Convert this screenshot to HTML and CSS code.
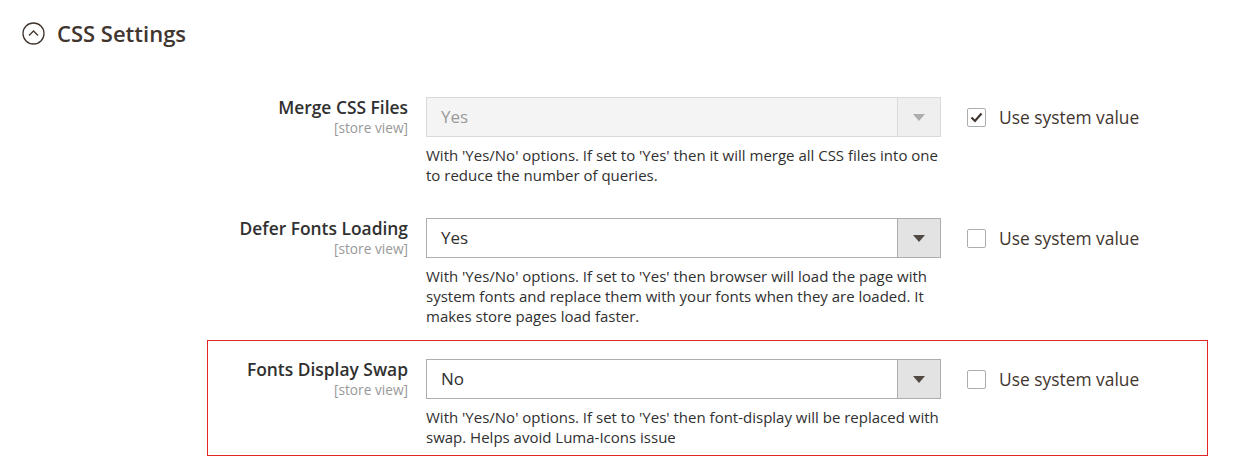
FILE: index.html
```html
<!DOCTYPE html>
<html lang="en">

<head>
    <meta charset="UTF-8">
    <title>CSS Settings</title>
    <link rel="stylesheet" href="styles.css">
</head>

<body>
    <div class="section-head">
        <span class="toggle-icon">
            <svg width="23" height="23" viewBox="0 0 23 23">
                <circle cx="11.5" cy="11.5" r="10.5" fill="none" stroke="#41362f" stroke-width="1.3" />
                <path d="M7 13.5 L11.5 9 L16 13.5" fill="none" stroke="#41362f" stroke-width="1.3" />
            </svg>
        </span>
        <h2 class="section-title">CSS Settings</h2>
    </div>

    <div class="config-table">
        <div class="config-row">
            <div class="config-label">
                <span class="label-text">Merge CSS Files</span>
                <span class="scope">[store view]</span>
            </div>
            <div class="config-value">
                <div class="select disabled">
                    <span class="select-value">Yes</span>
                    <span class="select-btn"><span class="arrow"></span></span>
                </div>
                <p class="note">With 'Yes/No' options. If set to 'Yes' then it will merge all CSS files into one to reduce the number of queries.</p>
            </div>
            <label class="use-default">
                <span class="checkbox checked">
                    <svg width="13" height="11" viewBox="0 0 13 11"><path d="M1.5 5.5 L5 9 L11.5 1.5" fill="none" stroke="#41362f" stroke-width="2.2" /></svg>
                </span>
                Use system value
            </label>
        </div>

        <div class="config-row">
            <div class="config-label">
                <span class="label-text">Defer Fonts Loading</span>
                <span class="scope">[store view]</span>
            </div>
            <div class="config-value">
                <div class="select">
                    <span class="select-value">Yes</span>
                    <span class="select-btn"><span class="arrow"></span></span>
                </div>
                <p class="note">With 'Yes/No' options. If set to 'Yes' then browser will load the page with system fonts and replace them with your fonts when they are loaded. It makes store pages load faster.</p>
            </div>
            <label class="use-default">
                <span class="checkbox"></span>
                Use system value
            </label>
        </div>

        <div class="config-row highlighted">
            <div class="config-label">
                <span class="label-text">Fonts Display Swap</span>
                <span class="scope">[store view]</span>
            </div>
            <div class="config-value">
                <div class="select">
                    <span class="select-value">No</span>
                    <span class="select-btn"><span class="arrow"></span></span>
                </div>
                <p class="note">With 'Yes/No' options. If set to 'Yes' then font-display will be replaced with swap. Helps avoid Luma-Icons issue</p>
            </div>
            <label class="use-default">
                <span class="checkbox"></span>
                Use system value
            </label>
        </div>
    </div>
</body>

</html>
```

FILE: styles.css
```css
:root {
    --text-color: #303030;
    --title-color: #41362f;
    --border-color: #adadad;
    --muted-color: #999999;
    --highlight: #e22626;
}

* {
    margin: 0;
    padding: 0;
    box-sizing: border-box;
}

body {
    font-family: 'Open Sans', 'Liberation Sans', sans-serif;
    color: var(--text-color);
    background: #ffffff;
}

.section-head {
    display: flex;
    align-items: flex-start;
    gap: 12px;
    padding: 19px 0 0 22px;
    height: 78px;
}

.toggle-icon {
    display: flex;
    margin-top: 3px;
}

.section-title {
    font-size: 22px;
    font-weight: 600;
    color: var(--title-color);
    line-height: 28px;
}

.config-table {
    margin-left: 207px;
    width: 1001px;
}

.config-row {
    display: grid;
    grid-template-columns: 200px 533px auto;
    padding: 18px 0 8px;
    border: 1px solid transparent;
    margin-bottom: 5px;
}

.config-row.highlighted {
    border-color: var(--highlight);
}

.config-label {
    display: flex;
    flex-direction: column;
    align-items: flex-end;
}

.label-text {
    font-size: 17.4px;
    font-weight: 600;
    line-height: 20px;
    color: var(--text-color);
}

.scope {
    font-size: 13.7px;
    line-height: 16px;
    margin-top: 3px;
    color: var(--muted-color);
}

.config-value {
    margin-left: 18px;
}

.select {
    display: flex;
    height: 40px;
    border: 1px solid var(--border-color);
    background: #ffffff;
}

.select-value {
    flex: 1;
    font-size: 17px;
    line-height: 38px;
    padding-left: 14px;
    color: var(--text-color);
}

.select-btn {
    width: 43px;
    border-left: 1px solid var(--border-color);
    background: #e3e3e3;
    display: flex;
    align-items: center;
    justify-content: center;
}

.arrow {
    width: 0;
    height: 0;
    border-left: 6px solid transparent;
    border-right: 6px solid transparent;
    border-top: 7px solid #514943;
}

.select.disabled {
    background: #f4f4f4;
    border-color: #dadada;
}

.select.disabled .select-value {
    color: var(--muted-color);
}

.select.disabled .select-btn {
    background: #efefef;
    border-left-color: #dadada;
}

.select.disabled .arrow {
    border-top-color: #adadad;
}

.note {
    font-size: 15px;
    line-height: 20px;
    margin-top: 8px;
    color: var(--text-color);
}

.use-default {
    display: flex;
    align-items: center;
    gap: 13px;
    height: 40px;
    margin-left: 26px;
    font-size: 17.4px;
    color: var(--title-color);
}

.checkbox {
    width: 19px;
    height: 19px;
    border: 1px solid var(--border-color);
    border-radius: 2px;
    background: #ffffff;
    display: flex;
    align-items: center;
    justify-content: center;
}
```
